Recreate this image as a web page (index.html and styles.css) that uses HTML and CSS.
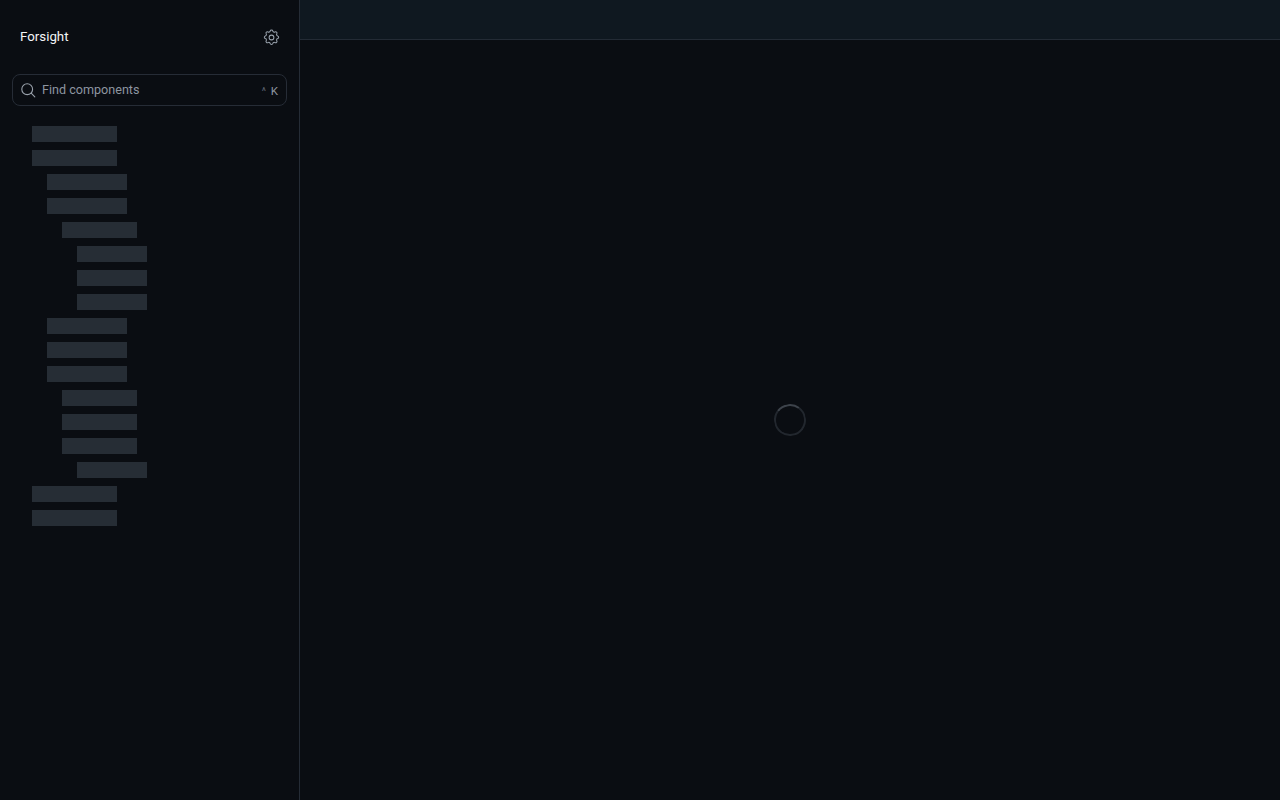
FILE: index.html
```html
<!DOCTYPE html>
<html lang="en">

<head>
    <meta charset="UTF-8">
    <meta name="viewport" content="width=device-width, initial-scale=1.0">
    <title>Forsight</title>
    <link rel="stylesheet" href="styles.css">
</head>

<body>
    <div class="app">
        <aside class="sidebar">
            <div class="brand">
                <span class="brand-name">Forsight</span>
                <svg class="gear" width="19" height="19" viewBox="0 0 24 24" fill="none" stroke="currentColor" stroke-width="1.3" stroke-linecap="round" stroke-linejoin="round">
                    <path d="M10.3 3.9c.4-1.7 3-1.7 3.4 0a1.7 1.7 0 0 0 2.6 1.1c1.5-.9 3.3.8 2.4 2.4a1.7 1.7 0 0 0 1.1 2.6c1.7.4 1.7 3 0 3.4a1.7 1.7 0 0 0-1.1 2.6c.9 1.5-.8 3.3-2.4 2.4a1.7 1.7 0 0 0-2.6 1.1c-.4 1.7-3 1.7-3.4 0a1.7 1.7 0 0 0-2.6-1.1c-1.5.9-3.3-.8-2.4-2.4a1.7 1.7 0 0 0-1.1-2.6c-1.7-.4-1.7-3 0-3.4a1.7 1.7 0 0 0 1.1-2.6c-.9-1.5.8-3.3 2.4-2.4a1.7 1.7 0 0 0 2.6-1.1z" />
                    <circle cx="12" cy="12" r="3" />
                </svg>
            </div>
            <div class="search">
                <svg class="search-icon" width="16" height="16" viewBox="0 0 16 16" fill="none" stroke="currentColor" stroke-width="1.1" stroke-linecap="round">
                    <circle cx="7.2" cy="7.2" r="5.4" />
                    <path d="M11.2 11.2l3.6 3.6" />
                </svg>
                <span class="search-text">Find components</span>
                <span class="search-keys"><span class="caret">^</span> K</span>
            </div>
            <div class="tree">
                <div class="bar d0"></div>
                <div class="bar d0"></div>
                <div class="bar d1"></div>
                <div class="bar d1"></div>
                <div class="bar d2"></div>
                <div class="bar d3"></div>
                <div class="bar d3"></div>
                <div class="bar d3"></div>
                <div class="bar d1"></div>
                <div class="bar d1"></div>
                <div class="bar d1"></div>
                <div class="bar d2"></div>
                <div class="bar d2"></div>
                <div class="bar d2"></div>
                <div class="bar d3"></div>
                <div class="bar d0"></div>
                <div class="bar d0"></div>
            </div>
        </aside>
        <main class="content">
            <div class="topbar"></div>
            <div class="loading">
                <div class="spinner"></div>
            </div>
        </main>
    </div>
</body>

</html>
```

FILE: styles.css
```css
* {
    box-sizing: border-box;
}

body {
    margin: 0;
    background-color: #0a0d12;
    color: #f4f5f6;
    font-family: "Roboto", "Liberation Sans", sans-serif;
}

.app {
    display: flex;
    height: 800px;
    overflow: hidden;
}

.sidebar {
    width: 300px;
    flex-shrink: 0;
    border-right: 1px solid #252c36;
    display: flex;
    flex-direction: column;
}

.brand {
    height: 74px;
    padding: 0 19px 0 20px;
    display: flex;
    align-items: center;
    justify-content: space-between;
}

.brand-name {
    font-size: 13.3px;
    line-height: 20px;
    margin-bottom: 1px;
}

.gear {
    color: #9aa3ae;
    margin-right: -1px;
}

.search {
    height: 32px;
    margin: 0 12px;
    width: 275px;
    padding: 0 8px 0 7px;
    border: 1px solid #262c36;
    border-radius: 8px;
    display: flex;
    align-items: center;
    color: #8d95a0;
}

.search-icon {
    flex-shrink: 0;
    color: #99a1ab;
    margin-right: 6px;
}

.search-text {
    flex: 1;
    font-size: 12.6px;
    line-height: 16px;
    margin-bottom: 1px;
}

.search-keys {
    font-size: 11.5px;
    line-height: 14px;
    padding-top: 3px;
    color: #8d95a0;
}

.caret {
    font-size: 10px;
    color: #5f6772;
    margin-right: 2px;
}

.tree {
    padding: 20px 0 0 32px;
    display: flex;
    flex-direction: column;
    gap: 8px;
}

.bar {
    height: 16px;
    background-color: #262d35;
}

.d0 {
    width: 85px;
}

.d1 {
    margin-left: 15px;
    width: 80px;
}

.d2 {
    margin-left: 30px;
    width: 75px;
}

.d3 {
    margin-left: 45px;
    width: 70px;
}

.content {
    flex: 1;
    display: flex;
    flex-direction: column;
}

.topbar {
    height: 40px;
    flex-shrink: 0;
    background-color: #0f1820;
    border-bottom: 1px solid #232b35;
}

.loading {
    flex: 1;
    display: flex;
    align-items: center;
    justify-content: center;
}

.spinner {
    width: 32px;
    height: 32px;
    border-radius: 50%;
    border: 2px solid #22272e;
    border-top-color: #3d434b;
    transform: rotate(-8deg);
}
```
